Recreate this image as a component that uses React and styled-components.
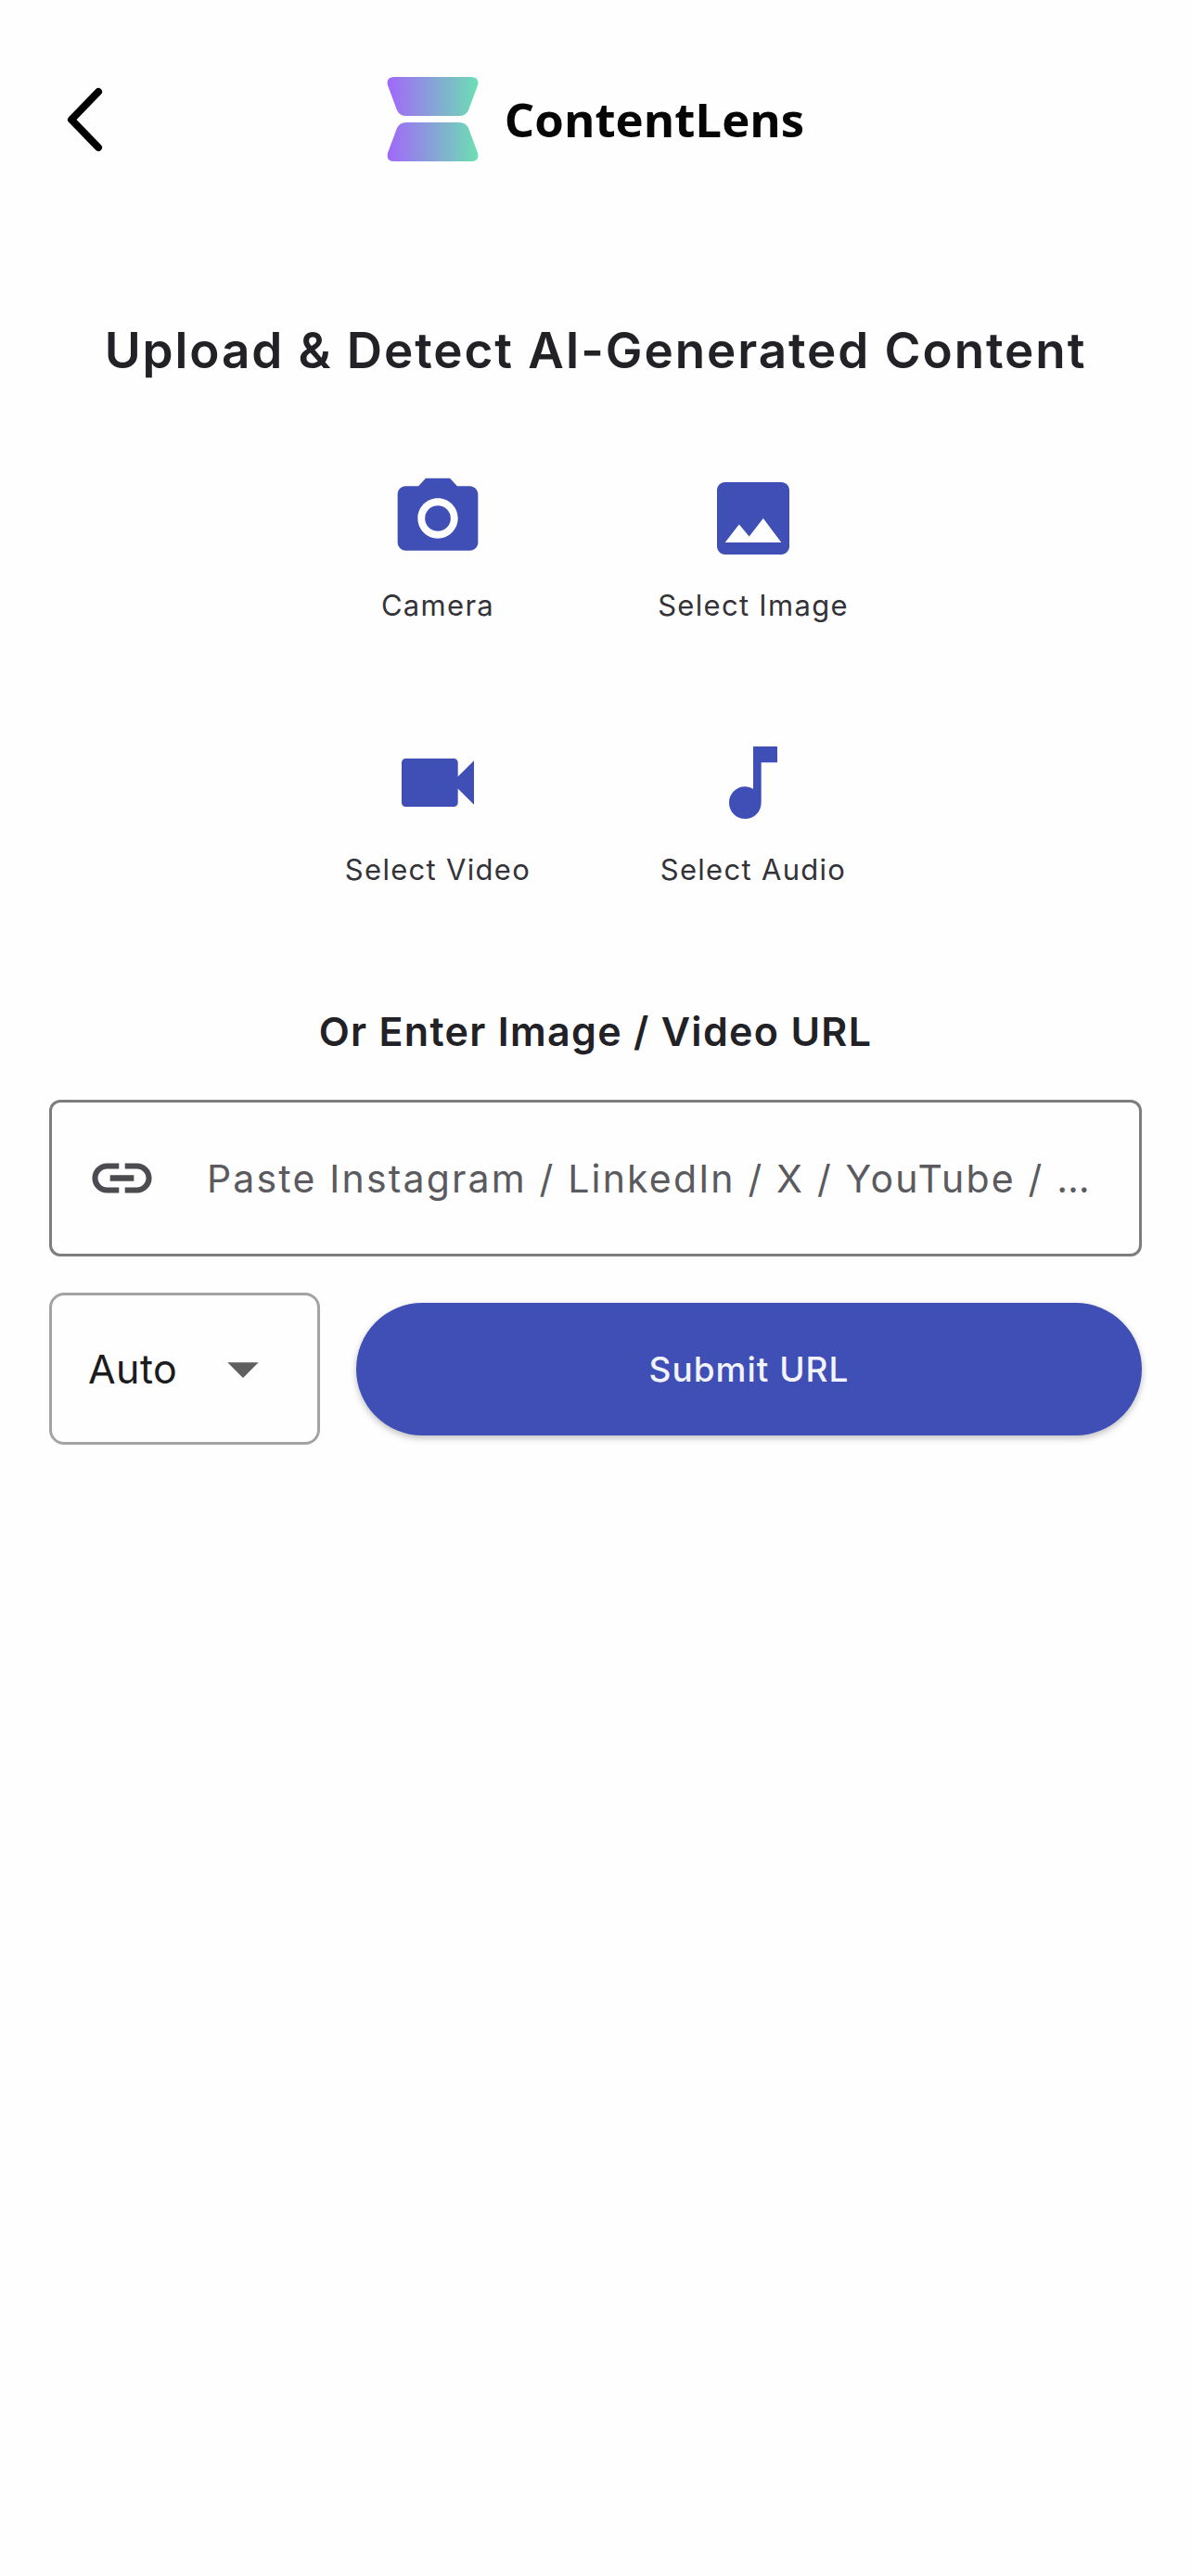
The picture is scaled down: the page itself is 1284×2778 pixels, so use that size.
import styled, { createGlobalStyle } from "styled-components";
import { MdCameraAlt, MdImage, MdVideocam, MdMusicNote, MdLink, MdArrowDropDown } from "react-icons/md";

const GlobalStyle = createGlobalStyle`
  html, body {
    margin: 0;
    padding: 0;
    background: #fefefe;
  }
  * {
    box-sizing: border-box;
  }
`;

const Screen = styled.div`
  width: 1284px;
  height: 2778px;
  background: #fefefe;
  font-family: Inter, "Liberation Sans", sans-serif;
  padding: 83px 53px 0;
  overflow: hidden;
`;

const Header = styled.header`
  display: grid;
  grid-template-columns: 1fr auto 1fr;
  align-items: center;
  height: 91px;
`;

const BackButton = styled.button`
  justify-self: start;
  display: flex;
  margin: 0 0 0 17px;
  padding: 0;
  border: none;
  background: none;
`;

const Logo = styled.div`
  display: flex;
  align-items: center;
  gap: 28px;
`;

const LogoName = styled.span`
  position: relative;
  top: -1px;
  font-family: "Open Sans", sans-serif;
  font-weight: 700;
  font-size: 51px;
  color: #050505;
`;

const Title = styled.h1`
  margin: 173px 0 0;
  font-size: 53px;
  line-height: 62px;
  font-weight: 600;
  letter-spacing: 1.9px;
  text-align: center;
  color: #212126;
`;

const Sources = styled.div`
  display: grid;
  grid-template-columns: 340px 340px;
  grid-auto-rows: 285px;
  justify-content: center;
  margin-top: 98px;
`;

const Source = styled.button`
  display: flex;
  flex-direction: column;
  align-items: center;
  margin: 0;
  padding: 0;
  border: none;
  background: none;
  font-family: inherit;
  color: #3f4fb5;
`;

const SourceLabel = styled.span`
  margin-top: 22px;
  font-size: 31px;
  line-height: 40px;
  letter-spacing: 1.3px;
  color: #333338;
`;

const UrlHeading = styled.h2`
  margin: 9px 0 0;
  font-size: 43px;
  line-height: 52px;
  font-weight: 600;
  letter-spacing: 1.3px;
  text-align: center;
  color: #212126;
`;

const UrlField = styled.div`
  display: flex;
  align-items: center;
  gap: 53px;
  height: 169px;
  margin-top: 48px;
  padding: 0 37px;
  border: 3px solid #7d7d7d;
  border-radius: 12px;
  color: #4b4b50;
`;

const Placeholder = styled.span`
  font-size: 41px;
  letter-spacing: 2.17px;
  white-space: nowrap;
  color: #5a5a5f;
`;

const SubmitRow = styled.div`
  display: flex;
  align-items: center;
  gap: 39px;
  margin-top: 39px;
`;

const ModeSelect = styled.div`
  display: flex;
  align-items: center;
  justify-content: space-between;
  width: 292px;
  height: 164px;
  padding: 0 40px 0 39px;
  border: 3px solid #a3a3a3;
  border-radius: 16px;
  font-size: 43px;
  letter-spacing: 0.4px;
  color: #1c1c1f;
`;

const SubmitButton = styled.button`
  flex: 1;
  height: 143px;
  border: none;
  border-radius: 72px;
  background: #3f4fb5;
  box-shadow: 0 3px 7px rgba(0, 0, 0, 0.25);
  font-family: inherit;
  font-size: 37px;
  font-weight: 500;
  letter-spacing: 1px;
  color: #f2f3fb;
`;

const sources = [
  { label: "Camera", Icon: MdCameraAlt },
  { label: "Select Image", Icon: MdImage },
  { label: "Select Video", Icon: MdVideocam },
  { label: "Select Audio", Icon: MdMusicNote },
];

function LensMark() {
  return (
    <svg width="99" height="91" viewBox="0 0 99 91">
      <defs>
        <linearGradient id="lens" x1="0" y1="0" x2="1" y2="0">
          <stop offset="0" stopColor="#a167fa" />
          <stop offset="1" stopColor="#6cdfb3" />
        </linearGradient>
      </defs>
      <path
        fill="url(#lens)"
        d="M8 0H91Q100 0 98 9L88 36Q85 42 78 42H21Q14 42 11 36L1 9Q-1 0 8 0Z"
      />
      <path
        fill="url(#lens)"
        d="M21 49H78Q85 49 88 55L98 82Q100 91 91 91H8Q-1 91 1 82L11 55Q14 49 21 49Z"
      />
    </svg>
  );
}

export default function App() {
  return (
    <Screen>
      <GlobalStyle />
      <Header>
        <BackButton>
          <svg width="44" height="70" viewBox="0 0 44 70" fill="none">
            <path d="M36 5L7 35L36 65" stroke="#000" strokeWidth="8" strokeLinecap="round" strokeLinejoin="round" />
          </svg>
        </BackButton>
        <Logo>
          <LensMark />
          <LogoName>ContentLens</LogoName>
        </Logo>
      </Header>

      <Title>Upload &amp; Detect AI-Generated Content</Title>

      <Sources>
        {sources.map(({ label, Icon }) => (
          <Source key={label}>
            <Icon size={104} />
            <SourceLabel>{label}</SourceLabel>
          </Source>
        ))}
      </Sources>

      <UrlHeading>Or Enter Image / Video URL</UrlHeading>

      <UrlField>
        <MdLink size={77} />
        <Placeholder>Paste Instagram / LinkedIn / X / YouTube / …</Placeholder>
      </UrlField>

      <SubmitRow>
        <ModeSelect>
          Auto
          <MdArrowDropDown size={80} color="#5f5f5f" />
        </ModeSelect>
        <SubmitButton>Submit URL</SubmitButton>
      </SubmitRow>
    </Screen>
  );
}
